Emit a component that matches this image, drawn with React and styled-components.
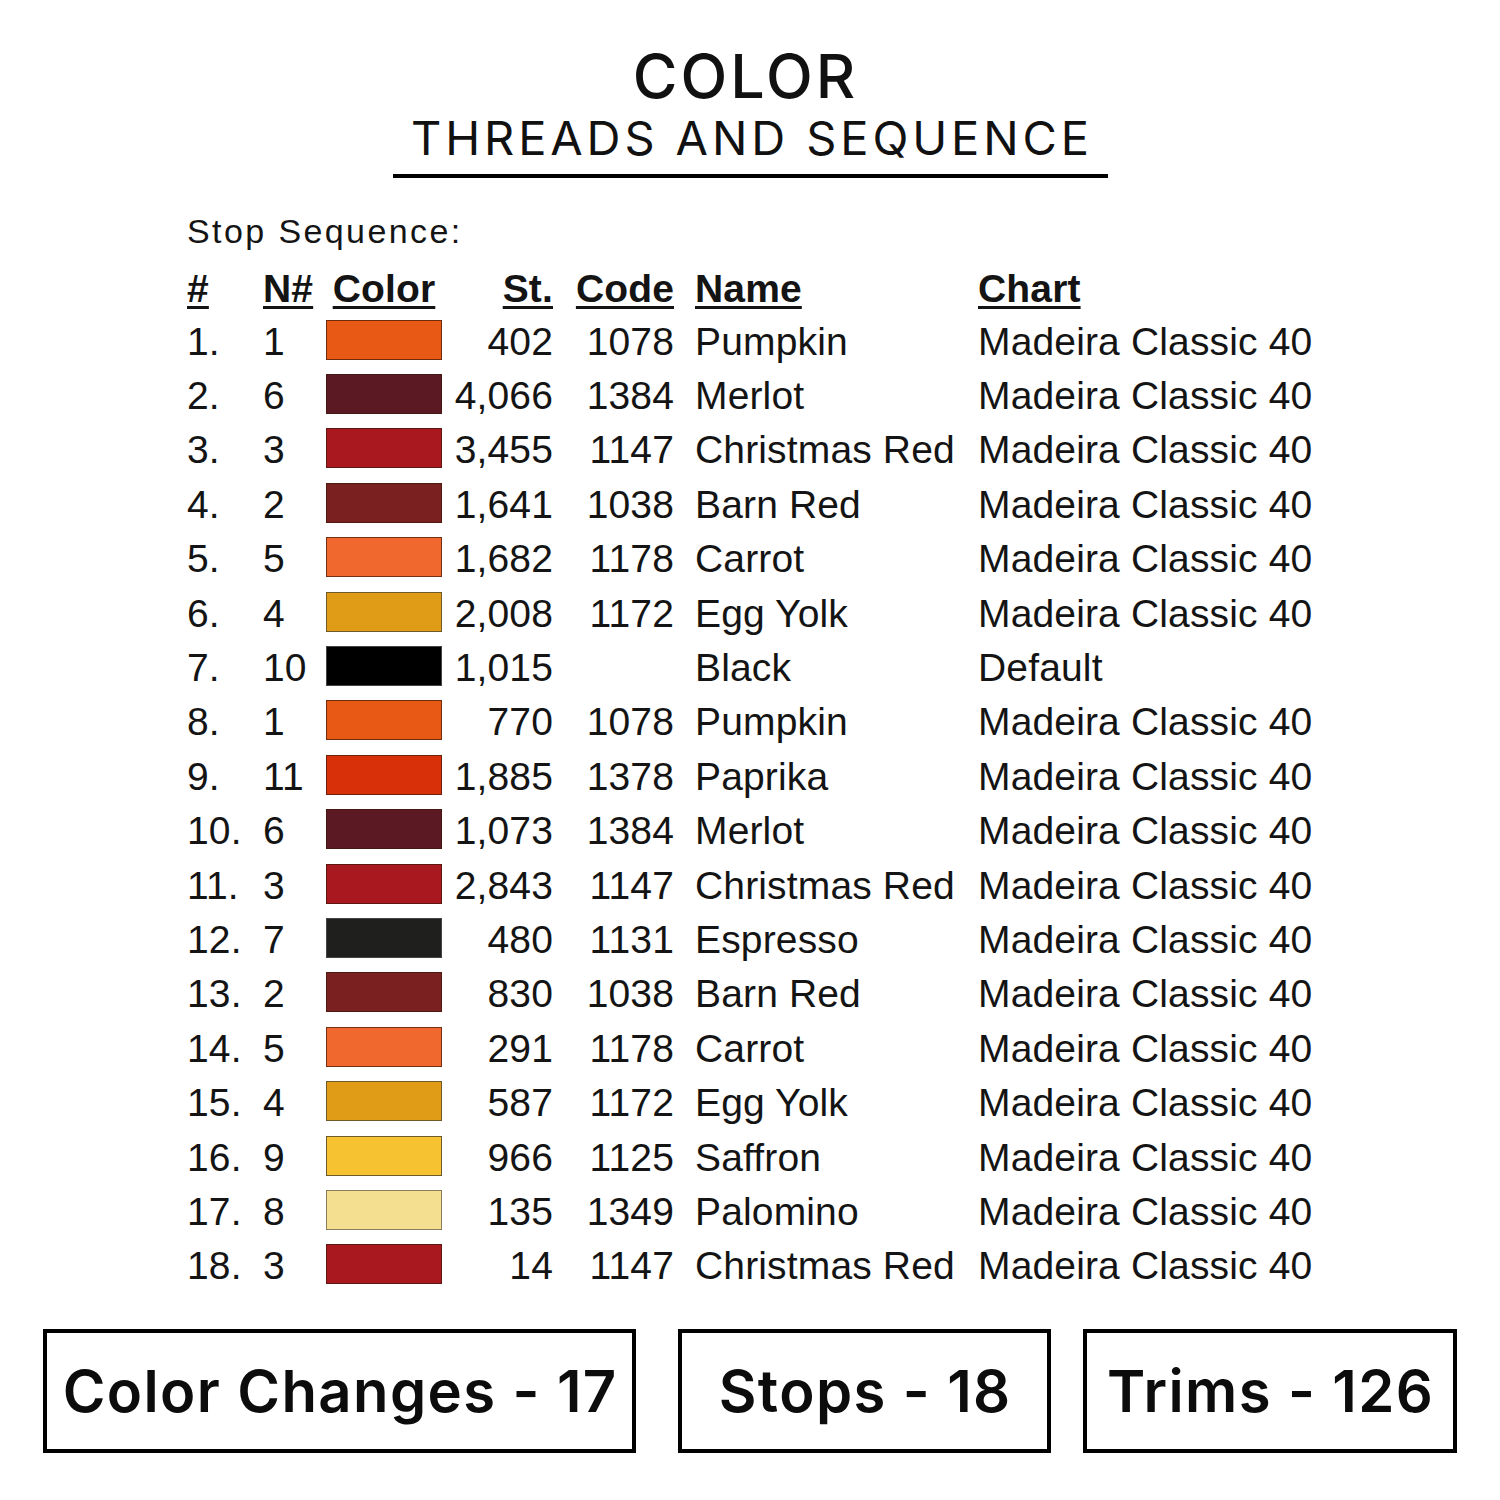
import React from "react";
import styled, { createGlobalStyle } from "styled-components";

const Global = createGlobalStyle`
  html, body { margin: 0; padding: 0; background: #ffffff; }
  body { width: 1500px; height: 1500px; overflow: hidden; }
`;

const Page = styled.div`
  width: 1500px;
  height: 1500px;
  background: #fff;
  display: flex;
  flex-direction: column;
  align-items: stretch;
  color: #111;
`;

const Header = styled.header`
  display: flex;
  flex-direction: column;
  align-items: center;
  padding-top: 41px;
  font-family: Inter, "Open Sans", sans-serif;
`;

const Title = styled.h1`
  margin: 0 12px 0 0;
  padding-left: 3px;
  font-size: 61px;
  line-height: 70px;
  font-weight: 500;
  letter-spacing: 3px;
`;

const Subtitle = styled.h2`
  margin: 0;
  padding-left: 3.9px;
  font-size: 47px;
  line-height: 54px;
  font-weight: 400;
  letter-spacing: 3.9px;
`;

const Rule = styled.div`
  width: 715px;
  height: 4px;
  margin-top: 9px;
  background: #000;
`;

const Table = styled.section`
  display: flex;
  flex-direction: column;
  padding-left: 187px;
  margin-top: 33px;
  font-family: "Liberation Sans", Arial, sans-serif;
  font-size: 39px;
  letter-spacing: 0.15px;
  color: #141414;
`;

const Caption = styled.div`
  font-size: 34px;
  line-height: 40px;
  letter-spacing: 2.4px;
  margin-bottom: 11px;
`;

const Grid = styled.div`
  display: grid;
  grid-template-columns: 76px 63px 116px 111px 121px 21px 283px auto;
  align-items: center;
  height: ${(p) => (p.$head ? "52px" : "54.4px")};
  font-weight: ${(p) => (p.$head ? 700 : 400)};
  line-height: 1;
  white-space: nowrap;
`;

const Cell = styled.span`
  grid-column: ${(p) => p.$col};
  text-align: ${(p) => p.$align || "left"};
  ${(p) =>
    p.$head &&
    `text-decoration: underline;
     text-decoration-thickness: 3px;
     text-underline-offset: 4px;`}
`;

const Swatch = styled.span`
  grid-column: 3;
  display: block;
  width: 116px;
  height: 40px;
  box-sizing: border-box;
  background: ${(p) => p.$c};
  border: 1.5px solid ${(p) => p.$b || "rgba(60, 25, 10, 0.7)"};
  margin-top: -3px;
`;

const Stats = styled.div`
  display: flex;
  margin-top: 36px;
  padding-left: 43px;
  font-family: Inter, "Open Sans", sans-serif;
`;

const StatBox = styled.div`
  box-sizing: border-box;
  width: ${(p) => p.$w}px;
  height: 124px;
  margin-right: ${(p) => p.$gap || 0}px;
  border: 4px solid #000;
  display: flex;
  align-items: center;
  justify-content: center;
  padding-left: 1.4px;
  font-size: 58px;
  font-weight: 600;
  letter-spacing: 1.4px;
  color: #0c0c0c;
  white-space: nowrap;
`;

const C = {
  pumpkin: "#E85916",
  merlot: "#5B1A23",
  xred: "#A9171F",
  barn: "#7A2020",
  carrot: "#F0682D",
  egg: "#E09C17",
  black: "#000000",
  paprika: "#D8310A",
  espresso: "#1F201E",
  saffron: "#F6C232",
  palomino: "#F4DE8F",
};

const rows = [
  [1, C.pumpkin, "402", "1078", "Pumpkin"],
  [6, C.merlot, "4,066", "1384", "Merlot"],
  [3, C.xred, "3,455", "1147", "Christmas Red"],
  [2, C.barn, "1,641", "1038", "Barn Red"],
  [5, C.carrot, "1,682", "1178", "Carrot"],
  [4, C.egg, "2,008", "1172", "Egg Yolk"],
  [10, C.black, "1,015", "", "Black", "Default"],
  [1, C.pumpkin, "770", "1078", "Pumpkin"],
  [11, C.paprika, "1,885", "1378", "Paprika"],
  [6, C.merlot, "1,073", "1384", "Merlot"],
  [3, C.xred, "2,843", "1147", "Christmas Red"],
  [7, C.espresso, "480", "1131", "Espresso"],
  [2, C.barn, "830", "1038", "Barn Red"],
  [5, C.carrot, "291", "1178", "Carrot"],
  [4, C.egg, "587", "1172", "Egg Yolk"],
  [9, C.saffron, "966", "1125", "Saffron"],
  [8, C.palomino, "135", "1349", "Palomino"],
  [3, C.xred, "14", "1147", "Christmas Red"],
];

const borderFor = (c) => {
  if (c === C.palomino) return "#8a7d5c";
  if (c === C.saffron || c === C.egg) return "#6e5a2a";
  if (c === C.black || c === C.espresso) return "#444";
  return undefined;
};

export default function App() {
  return (
    <Page>
      <Global />
      <Header>
        <Title>COLOR</Title>
        <Subtitle>THREADS AND SEQUENCE</Subtitle>
        <Rule />
      </Header>
      <Table>
        <Caption>Stop Sequence:</Caption>
        <Grid $head>
          <Cell $col={1} $head>#</Cell>
          <Cell $col={2} $head>N#</Cell>
          <Cell $col={3} $head $align="center">Color</Cell>
          <Cell $col={4} $head $align="right">St.</Cell>
          <Cell $col={5} $head $align="right">Code</Cell>
          <Cell $col={7} $head>Name</Cell>
          <Cell $col={8} $head>Chart</Cell>
        </Grid>
        {rows.map((r, i) => (
          <Grid key={i}>
            <Cell $col={1}>{i + 1}.</Cell>
            <Cell $col={2}>{r[0]}</Cell>
            <Swatch $c={r[1]} $b={borderFor(r[1])} />
            <Cell $col={4} $align="right">{r[2]}</Cell>
            <Cell $col={5} $align="right">{r[3]}</Cell>
            <Cell $col={7}>{r[4]}</Cell>
            <Cell $col={8}>{r[5] || "Madeira Classic 40"}</Cell>
          </Grid>
        ))}
      </Table>
      <Stats>
        <StatBox $w={593} $gap={42}>Color Changes - 17</StatBox>
        <StatBox $w={373} $gap={32}>Stops - 18</StatBox>
        <StatBox $w={374}>Trims - 126</StatBox>
      </Stats>
    </Page>
  );
}
